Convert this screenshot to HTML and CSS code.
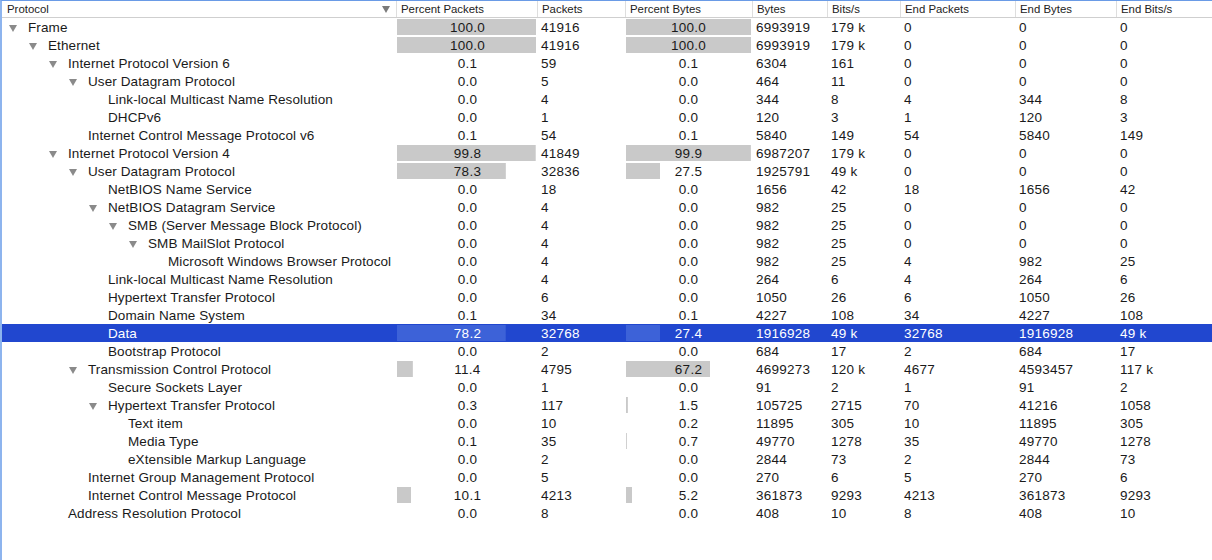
FILE: index.html
```html
<!DOCTYPE html>
<html>
<head>
<meta charset="utf-8">
<title>Protocol Hierarchy Statistics</title>
<link rel="stylesheet" href="styles.css">
</head>
<body>
<div class="tree">
 <div class="head">
  <div class="h-proto">Protocol<span class="sort"></span></div>
  <div>Percent Packets</div>
  <div>Packets</div>
  <div>Percent Bytes</div>
  <div>Bytes</div>
  <div>Bits/s</div>
  <div>End Packets</div>
  <div>End Bytes</div>
  <div>End Bits/s</div>
 </div>

 <div class="row"><div class="name l0"><span class="tri"></span>Frame</div><div class="pct" style="--w:1"><span>100.0</span></div><div>41916</div><div class="pct" style="--w:1"><span>100.0</span></div><div>6993919</div><div>179 k</div><div>0</div><div>0</div><div>0</div></div>
 <div class="row"><div class="name l1"><span class="tri"></span>Ethernet</div><div class="pct" style="--w:1"><span>100.0</span></div><div>41916</div><div class="pct" style="--w:1"><span>100.0</span></div><div>6993919</div><div>179 k</div><div>0</div><div>0</div><div>0</div></div>
 <div class="row"><div class="name l2"><span class="tri"></span>Internet Protocol Version 6</div><div class="pct"><span>0.1</span></div><div>59</div><div class="pct"><span>0.1</span></div><div>6304</div><div>161</div><div>0</div><div>0</div><div>0</div></div>
 <div class="row"><div class="name l3"><span class="tri"></span>User Datagram Protocol</div><div class="pct"><span>0.0</span></div><div>5</div><div class="pct"><span>0.0</span></div><div>464</div><div>11</div><div>0</div><div>0</div><div>0</div></div>
 <div class="row"><div class="name l4">Link-local Multicast Name Resolution</div><div class="pct"><span>0.0</span></div><div>4</div><div class="pct"><span>0.0</span></div><div>344</div><div>8</div><div>4</div><div>344</div><div>8</div></div>
 <div class="row"><div class="name l4">DHCPv6</div><div class="pct"><span>0.0</span></div><div>1</div><div class="pct"><span>0.0</span></div><div>120</div><div>3</div><div>1</div><div>120</div><div>3</div></div>
 <div class="row"><div class="name l3">Internet Control Message Protocol v6</div><div class="pct"><span>0.1</span></div><div>54</div><div class="pct"><span>0.1</span></div><div>5840</div><div>149</div><div>54</div><div>5840</div><div>149</div></div>
 <div class="row"><div class="name l2"><span class="tri"></span>Internet Protocol Version 4</div><div class="pct" style="--w:0.998"><span>99.8</span></div><div>41849</div><div class="pct" style="--w:0.999"><span>99.9</span></div><div>6987207</div><div>179 k</div><div>0</div><div>0</div><div>0</div></div>
 <div class="row"><div class="name l3"><span class="tri"></span>User Datagram Protocol</div><div class="pct" style="--w:0.783"><span>78.3</span></div><div>32836</div><div class="pct" style="--w:0.275"><span>27.5</span></div><div>1925791</div><div>49 k</div><div>0</div><div>0</div><div>0</div></div>
 <div class="row"><div class="name l4">NetBIOS Name Service</div><div class="pct"><span>0.0</span></div><div>18</div><div class="pct"><span>0.0</span></div><div>1656</div><div>42</div><div>18</div><div>1656</div><div>42</div></div>
 <div class="row"><div class="name l4"><span class="tri"></span>NetBIOS Datagram Service</div><div class="pct"><span>0.0</span></div><div>4</div><div class="pct"><span>0.0</span></div><div>982</div><div>25</div><div>0</div><div>0</div><div>0</div></div>
 <div class="row"><div class="name l5"><span class="tri"></span>SMB (Server Message Block Protocol)</div><div class="pct"><span>0.0</span></div><div>4</div><div class="pct"><span>0.0</span></div><div>982</div><div>25</div><div>0</div><div>0</div><div>0</div></div>
 <div class="row"><div class="name l6"><span class="tri"></span>SMB MailSlot Protocol</div><div class="pct"><span>0.0</span></div><div>4</div><div class="pct"><span>0.0</span></div><div>982</div><div>25</div><div>0</div><div>0</div><div>0</div></div>
 <div class="row"><div class="name l7">Microsoft Windows Browser Protocol</div><div class="pct"><span>0.0</span></div><div>4</div><div class="pct"><span>0.0</span></div><div>982</div><div>25</div><div>4</div><div>982</div><div>25</div></div>
 <div class="row"><div class="name l4">Link-local Multicast Name Resolution</div><div class="pct"><span>0.0</span></div><div>4</div><div class="pct"><span>0.0</span></div><div>264</div><div>6</div><div>4</div><div>264</div><div>6</div></div>
 <div class="row"><div class="name l4">Hypertext Transfer Protocol</div><div class="pct"><span>0.0</span></div><div>6</div><div class="pct"><span>0.0</span></div><div>1050</div><div>26</div><div>6</div><div>1050</div><div>26</div></div>
 <div class="row"><div class="name l4">Domain Name System</div><div class="pct"><span>0.1</span></div><div>34</div><div class="pct"><span>0.1</span></div><div>4227</div><div>108</div><div>34</div><div>4227</div><div>108</div></div>
 <div class="row sel"><div class="name l4">Data</div><div class="pct" style="--w:0.782"><span>78.2</span></div><div>32768</div><div class="pct" style="--w:0.274"><span>27.4</span></div><div>1916928</div><div>49 k</div><div>32768</div><div>1916928</div><div>49 k</div></div>
 <div class="row"><div class="name l4">Bootstrap Protocol</div><div class="pct"><span>0.0</span></div><div>2</div><div class="pct"><span>0.0</span></div><div>684</div><div>17</div><div>2</div><div>684</div><div>17</div></div>
 <div class="row"><div class="name l3"><span class="tri"></span>Transmission Control Protocol</div><div class="pct" style="--w:0.114"><span>11.4</span></div><div>4795</div><div class="pct" style="--w:0.672"><span>67.2</span></div><div>4699273</div><div>120 k</div><div>4677</div><div>4593457</div><div>117 k</div></div>
 <div class="row"><div class="name l4">Secure Sockets Layer</div><div class="pct"><span>0.0</span></div><div>1</div><div class="pct"><span>0.0</span></div><div>91</div><div>2</div><div>1</div><div>91</div><div>2</div></div>
 <div class="row"><div class="name l4"><span class="tri"></span>Hypertext Transfer Protocol</div><div class="pct"><span>0.3</span></div><div>117</div><div class="pct" style="--w:0.015"><span>1.5</span></div><div>105725</div><div>2715</div><div>70</div><div>41216</div><div>1058</div></div>
 <div class="row"><div class="name l5">Text item</div><div class="pct"><span>0.0</span></div><div>10</div><div class="pct"><span>0.2</span></div><div>11895</div><div>305</div><div>10</div><div>11895</div><div>305</div></div>
 <div class="row"><div class="name l5">Media Type</div><div class="pct"><span>0.1</span></div><div>35</div><div class="pct" style="--w:0.007"><span>0.7</span></div><div>49770</div><div>1278</div><div>35</div><div>49770</div><div>1278</div></div>
 <div class="row"><div class="name l5">eXtensible Markup Language</div><div class="pct"><span>0.0</span></div><div>2</div><div class="pct"><span>0.0</span></div><div>2844</div><div>73</div><div>2</div><div>2844</div><div>73</div></div>
 <div class="row"><div class="name l3">Internet Group Management Protocol</div><div class="pct"><span>0.0</span></div><div>5</div><div class="pct"><span>0.0</span></div><div>270</div><div>6</div><div>5</div><div>270</div><div>6</div></div>
 <div class="row"><div class="name l3">Internet Control Message Protocol</div><div class="pct" style="--w:0.101"><span>10.1</span></div><div>4213</div><div class="pct" style="--w:0.052"><span>5.2</span></div><div>361873</div><div>9293</div><div>4213</div><div>361873</div><div>9293</div></div>
 <div class="row"><div class="name l2">Address Resolution Protocol</div><div class="pct"><span>0.0</span></div><div>8</div><div class="pct"><span>0.0</span></div><div>408</div><div>10</div><div>8</div><div>408</div><div>10</div></div>
</div>
</body>
</html>
```

FILE: styles.css
```css
*{
  margin:0;
  padding:0;
  box-sizing:border-box;
}
html,body{
  height:100%;
  background:#fff;
}
body{
  font-family:"Liberation Sans", Arial, sans-serif;
  font-size:13.5px;
  color:#1a1a1a;
}
.tree{
  height:100%;
  border-left:2px solid #8db4ee;
  border-top:1px solid #6a9be6;
}
.head,
.row{
  display:grid;
  grid-template-columns:394px 141px 88px 127px 75px 73px 115px 101px 1fr;
}
.head{
  height:17px;
  border-bottom:1px solid #cfcfcf;
  font-size:11.4px;
  line-height:16px;
  color:#222;
}
.head div{
  padding-left:4px;
  border-left:1px solid #dedede;
  white-space:nowrap;
  overflow:hidden;
}
.head .h-proto{
  padding-left:5px;
  border-left:0;
  display:flex;
  align-items:center;
}
.sort{
  margin-left:auto;
  margin-right:6px;
  width:0;
  height:0;
  border-left:4px solid transparent;
  border-right:4px solid transparent;
  border-top:7px solid #7a7a7a;
}
.row{
  height:18px;
  line-height:20px;
  letter-spacing:0.25px;
  --bar:#c9c9c9;
}
.row div{
  padding-left:4px;
  white-space:nowrap;
  overflow:hidden;
}
.row .name{
  display:flex;
  align-items:flex-start;
  letter-spacing:0.1px;
}
.l0{ padding-left:26px !important; }
.l1{ padding-left:46px !important; }
.l2{ padding-left:66px !important; }
.l3{ padding-left:86px !important; }
.l4{ padding-left:106px !important; }
.l5{ padding-left:126px !important; }
.l6{ padding-left:146px !important; }
.l7{ padding-left:166px !important; }
.tri{
  flex:none;
  width:0;
  height:0;
  margin-left:-19px;
  margin-right:11px;
  margin-top:7px;
  border-left:4px solid transparent;
  border-right:4px solid transparent;
  border-top:7px solid #8a8a8a;
}
.row .pct{
  --w:0;
  padding:0;
  text-align:center;
  background:linear-gradient(var(--bar),var(--bar)) no-repeat;
  background-position:1px 1px;
  background-size:calc((100% - 2px) * var(--w)) 16px;
}
.row div.pct:nth-child(2){
  padding-left:2px;
}
.sel{
  background:#2147cf;
  color:#fff;
  --bar:#3d62d8;
}
```
